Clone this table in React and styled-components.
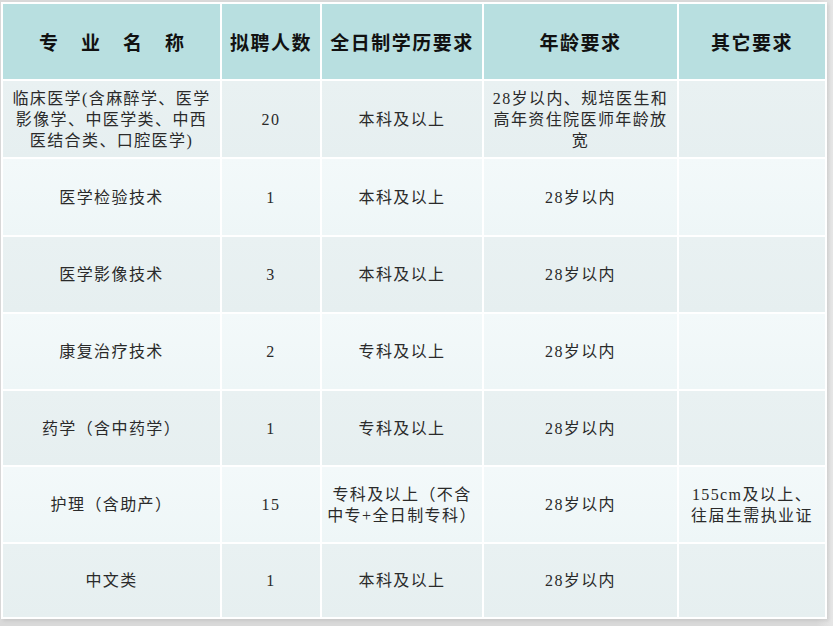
import React from "react";
import styled, { createGlobalStyle } from "styled-components";

const GlobalStyle = createGlobalStyle`
  html, body {
    margin: 0;
    padding: 0;
    background: #d8d8d8;
  }
`;

const Page = styled.div`
  width: 833px;
  height: 626px;
  padding: 2px 0 0 1px;
  box-sizing: border-box;
  background: linear-gradient(to right, #d9d9d9 0%, #d9d9d9 98%, #e6e6e6 100%);
`;

const Table = styled.div`
  width: 826px;
  box-sizing: border-box;
  display: grid;
  grid-template-columns: 217px 98px 160px 193px 146px;
  grid-template-rows: 75px 76px 76px 75px 75px 74px 75px 73px;
  gap: 2px;
  padding: 2px;
  background: #ffffff;
  box-shadow: 2px 2px 3px rgba(0, 0, 0, 0.08);
`;

const HeadCell = styled.div`
  display: flex;
  align-items: center;
  justify-content: center;
  background: #b8dfe0;
  color: #111;
  font-family: "Noto Sans CJK SC", "Liberation Sans", sans-serif;
  font-weight: 700;
  font-size: 19px;
  letter-spacing: ${(p) => (p.$wide ? "23px" : "1.5px")};
  padding-left: ${(p) => (p.$wide ? "23px" : "0")};
  white-space: nowrap;
`;

const Cell = styled.div`
  display: flex;
  align-items: center;
  justify-content: center;
  text-align: center;
  padding: 0 2px;
  background: ${(p) =>
    p.$alt
      ? "linear-gradient(to bottom, #f3f9fa, #eef6f7)"
      : "linear-gradient(to bottom, #e9f1f2, #e6eff0)"};
  color: #2a2a2a;
  font-family: "Liberation Serif", "Noto Sans CJK SC", serif;
  font-size: 16px;
  line-height: 21px;
  letter-spacing: 1.4px;
`;

const headers = [
  { text: "专业名称", wide: true },
  { text: "拟聘人数" },
  { text: "全日制学历要求" },
  { text: "年龄要求" },
  { text: "其它要求" },
];

const rows = [
  [
    ["临床医学(含麻醉学、医学", "影像学、中医学类、中西", "医结合类、口腔医学)"],
    ["20"],
    ["本科及以上"],
    ["28岁以内、规培医生和", "高年资住院医师年龄放", "宽"],
    [],
  ],
  [["医学检验技术"], ["1"], ["本科及以上"], ["28岁以内"], []],
  [["医学影像技术"], ["3"], ["本科及以上"], ["28岁以内"], []],
  [["康复治疗技术"], ["2"], ["专科及以上"], ["28岁以内"], []],
  [["药学（含中药学）"], ["1"], ["专科及以上"], ["28岁以内"], []],
  [
    ["护理（含助产）"],
    ["15"],
    ["专科及以上（不含", "中专+全日制专科）"],
    ["28岁以内"],
    ["155cm及以上、", "往届生需执业证"],
  ],
  [["中文类"], ["1"], ["本科及以上"], ["28岁以内"], []],
];

const Lines = ({ lines }) =>
  lines.map((line, i) => (
    <React.Fragment key={i}>
      {i > 0 && <br />}
      {line}
    </React.Fragment>
  ));

export default function App() {
  return (
    <>
      <GlobalStyle />
      <Page>
        <Table>
          {headers.map((h) => (
            <HeadCell key={h.text} $wide={h.wide}>
              {h.text}
            </HeadCell>
          ))}
          {rows.map((row, r) =>
            row.map((cell, c) => (
              <Cell key={`${r}-${c}`} $alt={r % 2 === 1}>
                <div>
                  <Lines lines={cell} />
                </div>
              </Cell>
            ))
          )}
        </Table>
      </Page>
    </>
  );
}
